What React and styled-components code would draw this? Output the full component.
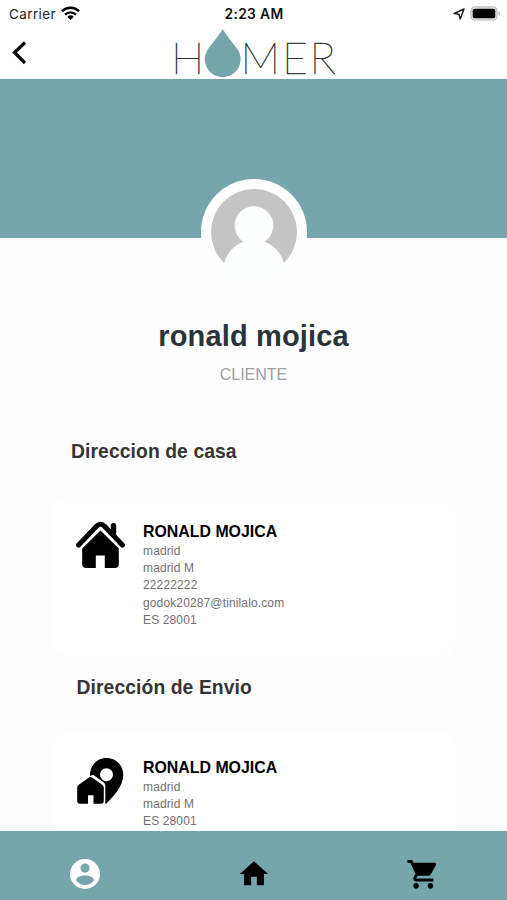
import React from "react";
import styled, { createGlobalStyle } from "styled-components";
import { MdHome, MdShoppingCart } from "react-icons/md";

const GlobalStyle = createGlobalStyle`
  * {
    box-sizing: border-box;
  }
  body {
    margin: 0;
    background: #fdfdfd;
    font-family: "Liberation Sans", Arial, sans-serif;
  }
  h1, h2, h3, p {
    margin: 0;
  }
`;

const Screen = styled.div`
  display: flex;
  flex-direction: column;
  width: 507px;
  height: 900px;
  overflow: hidden;
`;

const Header = styled.header`
  flex: none;
  height: 79px;
  background: #fff;
`;

const StatusBar = styled.div`
  display: grid;
  grid-template-columns: 1fr auto 1fr;
  align-items: center;
  height: 27px;
  padding: 0 6px 0 9px;
  font-family: "Inter", sans-serif;
  font-size: 13.4px;
  color: #222;
`;

const Carrier = styled.div`
  display: flex;
  align-items: center;
  gap: 5px;
  letter-spacing: 0.45px;
`;

const Time = styled.div`
  font-weight: 600;
  font-size: 13.8px;
  letter-spacing: 0.35px;
  margin-right: 2px;
  color: #111;
`;

const Indicators = styled.div`
  display: flex;
  align-items: center;
  justify-content: flex-end;
  gap: 5px;
`;

const NavRow = styled.div`
  display: grid;
  grid-template-columns: 172px 166px 1fr;
  height: 52px;
`;

const BackButton = styled.button`
  display: flex;
  align-items: center;
  padding: 0 0 0 11px;
  border: 0;
  background: none;
`;

const LogoSvg = styled.svg`
  display: block;
  overflow: visible;
  font-family: "Lato", sans-serif;
  font-weight: 100;
  font-size: 44.5px;
  fill: #222;
  stroke: #333;
  stroke-width: 0.5px;
`;

const Content = styled.main`
  flex: 1;
  min-height: 0;
  overflow: hidden;
`;

const Banner = styled.div`
  height: 159px;
  background: #76a6ab;
`;

const Avatar = styled.div`
  width: 106px;
  height: 106px;
  margin: -59px auto 0;
  border-radius: 50%;
  background: #fdfefe;
`;

const Name = styled.h1`
  margin-top: 33px;
  font-size: 29px;
  line-height: 36px;
  letter-spacing: 0.15px;
  text-align: center;
  color: #2a3338;
`;

const Role = styled.p`
  margin-top: 11px;
  font-size: 16px;
  line-height: 20px;
  text-align: center;
  color: #9a9fa3;
`;

const SectionTitle = styled.h2`
  margin: ${(p) => p.$margin};
  font-size: 19.3px;
  line-height: 24px;
  letter-spacing: 0.1px;
  color: #353535;
`;

const Card = styled.section`
  display: flex;
  width: 404px;
  height: 159px;
  margin-left: 52px;
  padding: 24px 24px 0;
  border-radius: 16px;
  background: #fff;
`;

const CardIcon = styled.div`
  flex: none;
  width: 67px;
`;

const CardName = styled.h3`
  margin: 1px 0;
  font-size: 15.9px;
  line-height: 20px;
  color: #000;
`;

const Line = styled.p`
  font-size: 12px;
  line-height: 17.2px;
  letter-spacing: 0.13px;
  color: #707070;
`;

const TabBar = styled.nav`
  display: grid;
  grid-template-columns: repeat(3, 1fr);
  flex: none;
  height: 69px;
  padding-top: 25px;
  background: #76a6ab;
`;

const Tab = styled.button`
  display: flex;
  justify-content: center;
  align-items: flex-start;
  padding: ${(p) => p.$pad || "0"};
  border: 0;
  background: none;
  color: ${(p) => (p.$active ? "#fff" : "#000")};
`;

const WifiIcon = () => (
  <svg width="19" height="15" viewBox="0 0 18 14" fill="none" stroke="#000">
    <path d="M0.9 4.9C5.5 0.5 12.5 0.5 17.1 4.9" strokeWidth="2.5" />
    <path d="M3.8 8C6.8 5.2 11.2 5.2 14.2 8" strokeWidth="2.3" />
    <path d="M6 10.1a4.5 4.5 0 0 1 6 0L9 13.3z" fill="#000" stroke="none" />
  </svg>
);

const BatteryIcon = () => (
  <svg width="31" height="15" viewBox="0 0 31 15">
    <rect x="0.9" y="0.9" width="26.2" height="13.2" rx="3.6" fill="#e4e4e4" stroke="#b5b5b5" />
    <rect x="2.7" y="2.8" width="22.6" height="9.4" rx="1.8" fill="#000" />
    <path d="M28.6 5.2c2 .7 2 3.9 0 4.6z" fill="#b5b5b5" />
  </svg>
);

const Logo = () => (
  <LogoSvg width="166" height="52" viewBox="0 0 166 52">
    <text x="-1" y="46.5">H</text>
    <path
      d="M50.700 2C53.500 7 60.500 15.500 65 21.500A17.900 17.900 0 1 1 36.400 21.500C40.900 15.500 47.900 7 50.700 2z"
      fill="#76a6ab"
      stroke="none"
    />
    <text x="68.5" y="46.5">M</text>
    <text x="110" y="46.5">E</text>
    <text x="137.500" y="46.5">R</text>
  </LogoSvg>
);

const AvatarIcon = () => (
  <svg width="106" height="106" viewBox="0 0 106 106">
    <circle cx="53" cy="53" r="43" fill="#c4c4c4" />
    <circle cx="53" cy="46.500" r="19.300" fill="#fdfefe" />
    <circle cx="53" cy="92" r="31" fill="#fdfefe" />
  </svg>
);

const HouseIcon = () => (
  <svg width="49" height="50" viewBox="0 0 49 50">
    <path
      d="M2.600 24L20.500 5.300Q24.500 1.200 28.500 5.300L46.400 24"
      fill="none"
      stroke="#000"
      strokeWidth="5"
      strokeLinecap="round"
    />
    <path d="M37.500 12V4.700" stroke="#000" strokeWidth="5.400" strokeLinecap="round" />
    <path d="M24.500 9.500L42.800 27.500V43a4 4 0 0 1-4 4H28.800V34.500H19.800V47H10.200a4 4 0 0 1-4-4V27.500z" />
  </svg>
);

const HousePinIcon = () => (
  <svg width="49" height="50" viewBox="0 0 49 50">
    <path
      fillRule="evenodd"
      d="M14 19C14 8 21 1 30.500 1S47.300 8.500 47.300 18C47.300 29 37 40 30.500 46.500Q29.300 47.300 29.300 45.500V28.500Q29.300 26.500 27.500 25.200L17 17.800zM30.500 11.200a6.500 6.500 0 1 0 0 13 6.500 6.500 0 0 0 0-13z"
    />
    <path d="M12.600 20.700Q14.500 19.400 16.400 20.700L26.200 27.800Q27.800 28.800 27.800 30.500V43.700a3 3 0 0 1-3 3H17.500V38.200H12V46.700H4.200a3 3 0 0 1-3-3V30.500Q1.200 28.800 2.800 27.800z" />
  </svg>
);

const AccountIcon = () => (
  <svg width="36" height="36" viewBox="0 0 36 36">
    <circle cx="18" cy="18" r="15" fill="currentColor" />
    <circle cx="18" cy="12" r="4.600" fill="#76a6ab" />
    <path d="M9 24.300C9 21.300 14 19.600 18 19.600S27 21.300 27 24.300C25 27.300 21.800 29 18 29S11 27.300 9 24.300z" fill="#76a6ab" />
  </svg>
);

const AddressCard = ({ icon, name, lines }) => (
  <Card>
    <CardIcon>{icon}</CardIcon>
    <div>
      <CardName>{name}</CardName>
      {lines.map((line) => (
        <Line key={line}>{line}</Line>
      ))}
    </div>
  </Card>
);

export default function App() {
  return (
    <Screen>
      <GlobalStyle />
      <Header>
        <StatusBar>
          <Carrier>
            Carrier
            <WifiIcon />
          </Carrier>
          <Time>2:23 AM</Time>
          <Indicators>
            <svg width="12" height="12" viewBox="0 0 12 12" fill="none" stroke="#222" strokeWidth="1.500" strokeLinejoin="round">
              <path d="M11 1L1 5.500L6 6.200L7.200 11z" />
            </svg>
            <BatteryIcon />
          </Indicators>
        </StatusBar>
        <NavRow>
          <BackButton aria-label="back">
            <svg width="16" height="24" viewBox="0 0 16 24" fill="none" stroke="#000" strokeWidth="3.200">
              <path d="M14 1.500L3.500 11.500L14 22" />
            </svg>
          </BackButton>
          <Logo />
        </NavRow>
      </Header>
      <Content>
        <Banner />
        <Avatar>
          <AvatarIcon />
        </Avatar>
        <Name>ronald mojica</Name>
        <Role>CLIENTE</Role>
        <SectionTitle $margin="55px 0 33px 71px">Direccion de casa</SectionTitle>
        <AddressCard
          icon={<HouseIcon />}
          name="RONALD MOJICA"
          lines={["madrid", "madrid M", "22222222", "godok20287@tinilalo.com", "ES 28001"]}
        />
        <SectionTitle $margin="20px 0 33px 76.500px">Dirección de Envio</SectionTitle>
        <AddressCard
          icon={<HousePinIcon />}
          name="RONALD MOJICA"
          lines={["madrid", "madrid M", "ES 28001"]}
        />
      </Content>
      <TabBar>
        <Tab $active aria-label="account">
          <AccountIcon />
        </Tab>
        <Tab $pad="1px 0 0" aria-label="home">
          <MdHome size={34} />
        </Tab>
        <Tab $pad="1px 0 0 1px" aria-label="cart">
          <MdShoppingCart size={34.5} />
        </Tab>
      </TabBar>
    </Screen>
  );
}
